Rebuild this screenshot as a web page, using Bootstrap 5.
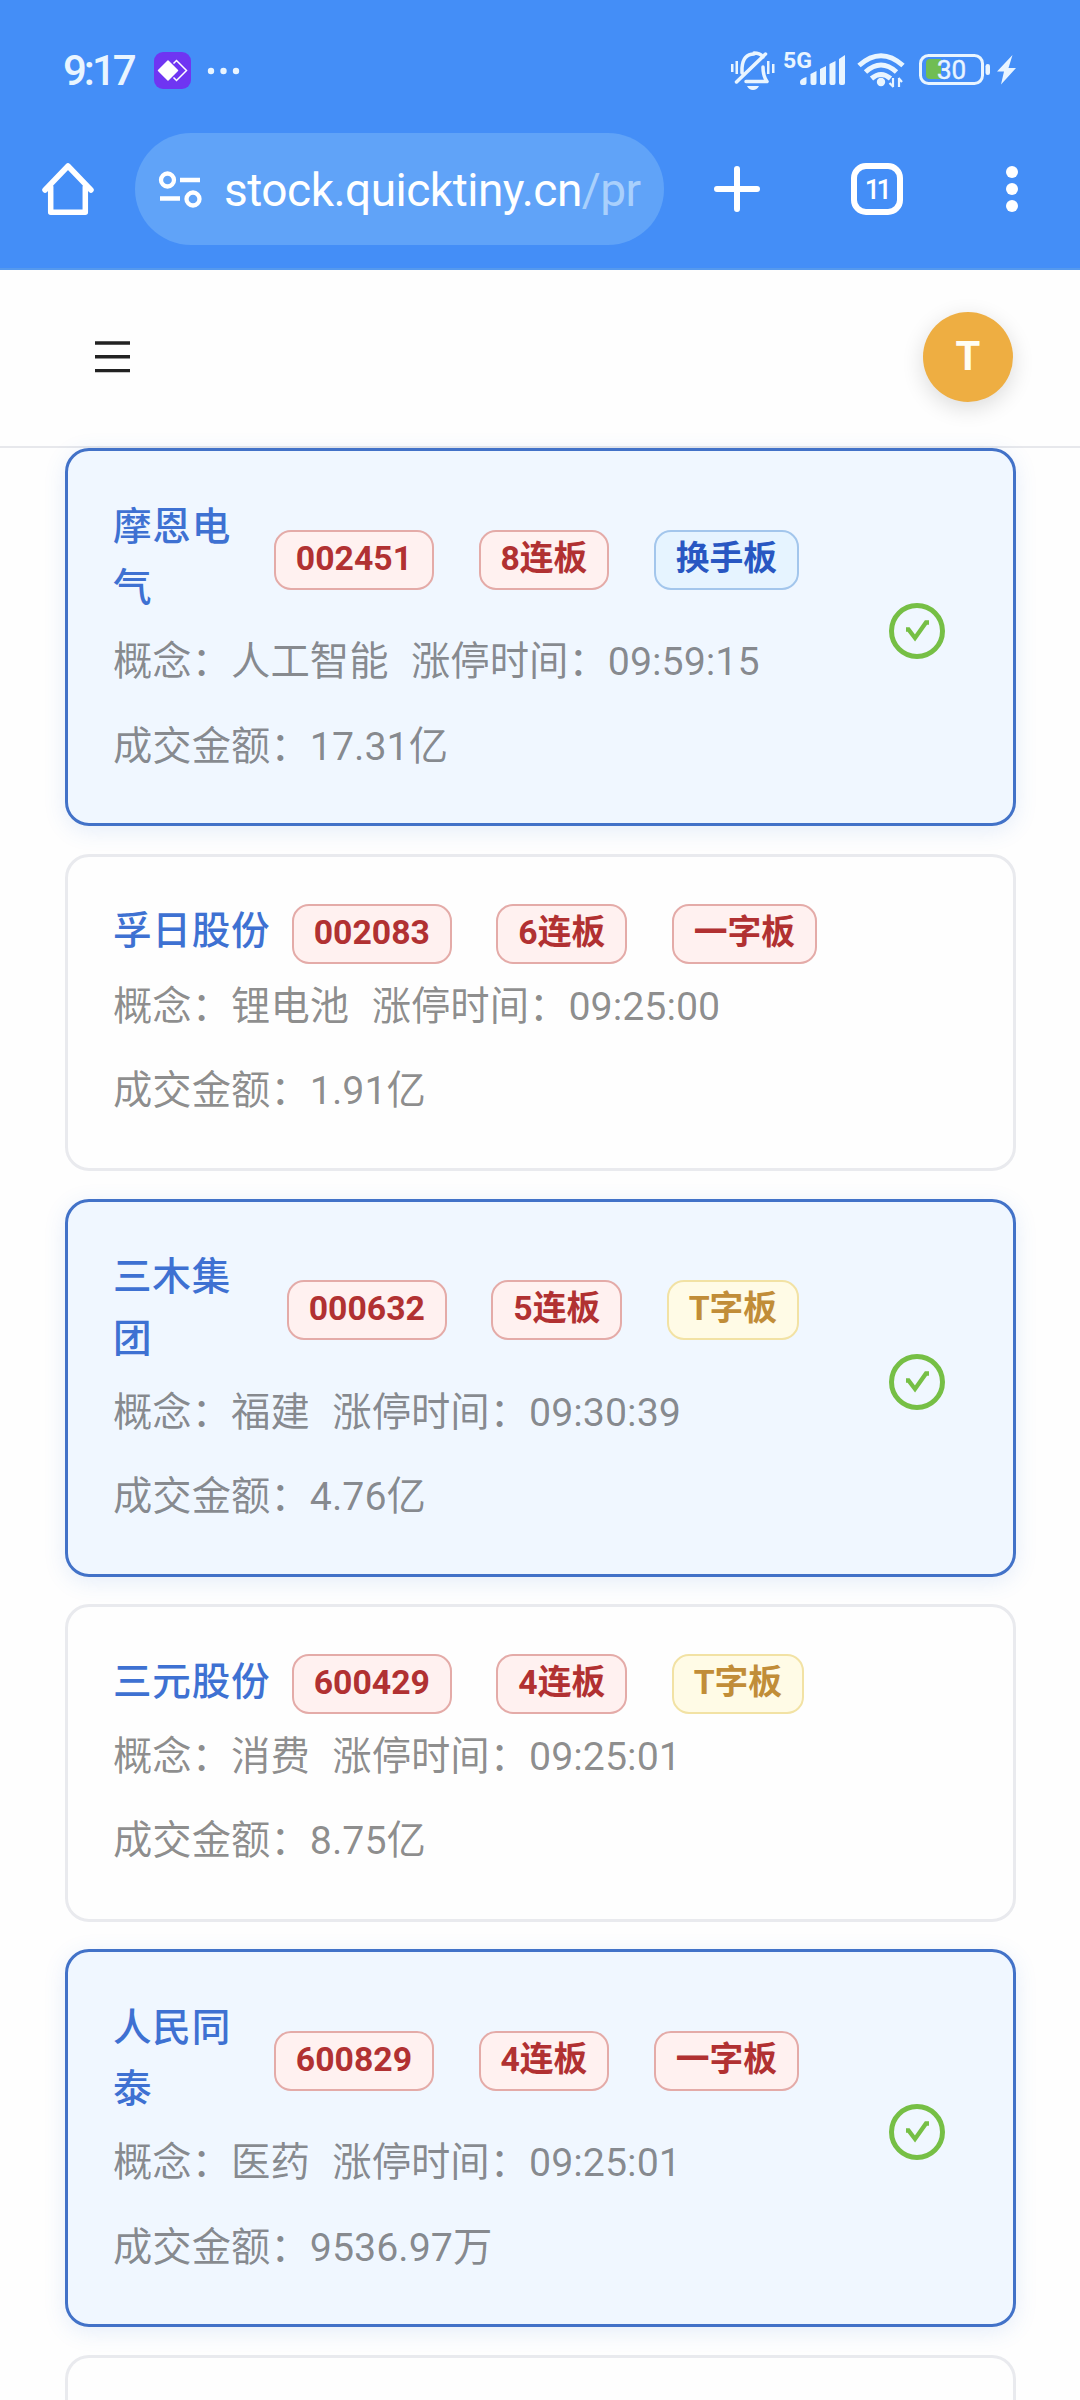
<!DOCTYPE html>
<html lang="zh-CN">
<head>
<meta charset="utf-8">
<meta name="viewport" content="width=device-width, initial-scale=1">
<title>stock.quicktiny.cn</title>
<link rel="stylesheet" href="https://cdn.jsdelivr.net/npm/bootstrap@5.3.0/dist/css/bootstrap.min.css">
<style>
  body { width: 1080px; height: 2400px; overflow: hidden; background: #fefefe; font-family: Roboto, "Noto Sans CJK SC", sans-serif; }
  svg { display: block; flex: none; overflow: visible; }
  .browser-top { height: 270px; background: #448ef7; border-bottom: 2px solid #5599ee; color: #fff; }
  .status-row { height: 133px; padding: 8px 64px 0 63px; color: #e9f5ff; }
  .clock { font-size: 42px; font-weight: 500; line-height: 50px; width: 91px; letter-spacing: -3px; white-space: nowrap; }
  .sys-icons { margin-top: 3px; }
  .tool-row { height: 112px; padding-left: 42px; }
  .url-pill { width: 529px; height: 112px; margin-left: 41px; padding-left: 24px; border-radius: 56px; background: #60a3f8; }
  .url-text { margin-left: 22px; padding-top: 2px; font-size: 46px; white-space: nowrap; letter-spacing: -.5px; }
  .url-text span { color: #a9d0fc; }
  .site-bar { height: 178px; padding: 0 67px 3px 95px; background: #fefefe; border-bottom: 2px solid #e7e8ec; }
  .avatar { width: 90px; height: 90px; background: #eeae42; color: #fffef4; font-size: 40px; font-weight: 700; box-shadow: 0 6px 22px rgba(0,0,0,.14); }
  .stock-list { height: 1952px; padding: 0 64px 0 65px; gap: 27.5px; }
  .stock { height: 317.5px; flex: none; border: 3px solid #e9eaee; border-radius: 24px; padding: 42px 68px 0 45px; background: #fefefe; }
  .stock.picked { height: 378px; padding-top: 44.5px; border-color: #4272c8; background: #f0f7ff; box-shadow: 0 5px 22px rgba(60,120,220,.13); }
  .stock.cut { height: 46px; border-bottom: 0; border-bottom-left-radius: 0; border-bottom-right-radius: 0; }
  .stock-main { width: 686px; }
  .stock.picked .stock-main { flex: none; }
  .stock-name { color: #3e71d2; font-size: 38.6px; letter-spacing: .75px; line-height: 61.875px; font-weight: 500; margin-right: 21.5px; }
  .tags { gap: 44.7px; flex: none; padding-top: 5px; }
  .tag { height: 60px; padding: 0 19.9px; border: 2px solid; border-radius: 17px; font-size: 33.75px; line-height: 53px; font-weight: 700; white-space: nowrap; }
  .tag-red { color: #b13132; background: #fff1f0; border-color: #e4aba8; }
  .tag-blue { color: #2857c2; background: #e6f4ff; border-color: #a3c6ec; }
  .tag-gold { color: #c18d38; background: #fffbe6; border-color: #f2e2a4; }
  .facts { color: rgba(0,0,0,.45); font-size: 39.375px; line-height: 61.875px; gap: 22.5px; white-space: nowrap; margin-top: 12px; }
  .facts + .facts { margin-top: 22.5px; }
  .tick { margin-top: 107.5px; }
</style>
</head>
<body>
<header class="browser-top">
  <div class="status-row d-flex align-items-center">
    <div class="clock">9:17</div>
    <svg width="37" height="37" viewBox="0 0 37 37"><rect width="37" height="37" rx="9" fill="#6f35f2"/><path d="M14 9 23.500 18.500 14 28 4.500 18.500z" fill="#fff" stroke="#fff" stroke-width="1.500" stroke-linejoin="round"/><path d="M19.500 11.500 22.500 8.500 32.500 18.500 22.500 28.500 19.500 25.500" fill="none" stroke="#fff" stroke-width="1.500"/></svg>
    <svg width="32" height="8" viewBox="0 0 32 8" style="margin-left:17px" fill="#e9f5ff"><circle cx="3" cy="4" r="3.200"/><circle cx="15.500" cy="4" r="3.200"/><circle cx="28" cy="4" r="3.200"/></svg>
    <svg class="ms-auto sys-icons" width="286" height="44" viewBox="730 50 286 44" fill="#e9f5ff" stroke="none">
      <g fill="none" stroke="#e9f5ff" stroke-width="3.500" stroke-linecap="round" stroke-linejoin="round"><path d="M742 73V68Q743 54 754 54M754 53Q760 53 763 57M736.500 82 765.500 54M763 67Q763 76 767 81.500H746"/></g>
      <path d="M747 86h12q-2 4-6 4t-6-4z"/>
      <path d="M731 64h2.500v8H731zm4.500-3H738v13h-2.500zM767 61h2.500v13H767zm5 3h2.500v9H772z"/>
      <text x="783" y="67.500" font-family="Roboto" font-size="22" font-weight="700" textLength="29" lengthAdjust="spacingAndGlyphs">5G</text>
      <path d="M800 82q0-3 6.500-5v6q0 2-2 2h-2.500q-2 0-2-3zM810.500 74l6-3v12q0 2-2 2h-2q-2 0-2-2zM820 69l6-3v17q0 2-2 2h-2q-2 0-2-2zM829.500 64l6-3v22q0 2-2 2h-2q-2 0-2-2zM839 59l6-4v28q0 2-2 2h-2q-2 0-2-2z"/>
      <g fill="none" stroke="#e9f5ff" stroke-width="5"><path d="M859 65.500Q881 46 903 65.500M865.500 72Q881 58 896.500 72M871.500 78.500Q881 70.500 890.500 78.500"/></g>
      <circle cx="881" cy="82" r="4.200"/><path d="M893 78v9M893.500 87 889.500 83M899 87v-9M898.500 78 902 82" stroke="#e9f5ff" stroke-width="2.200" fill="none"/>
      <rect x="920.500" y="55.500" width="62" height="28" rx="8" fill="none" stroke="#e9f5ff" stroke-width="3"/>
      <path d="M930 59h11v20h-11q-4 0-4-4V63q0-4 4-4z" fill="#70bd54"/>
      <text x="937" y="79" font-family="Roboto" font-size="26" font-weight="400" textLength="29" stroke="#e9f5ff" stroke-width=".4">30</text>
      <rect x="985.500" y="64" width="4.500" height="11" rx="2.200"/>
      <path d="M1012.500 55 997 71.500h7l-3 13L1016 68h-7.500z"/>
    </svg>
  </div>
  <div class="tool-row d-flex align-items-center">
    <svg width="52" height="52" viewBox="0 0 52 52" fill="none" stroke="#fff" stroke-width="5.500" stroke-linejoin="round" stroke-linecap="round"><path d="M3 27 26 3 49 27M8.700 24v25.300h34.600V24"/></svg>
    <div class="url-pill d-flex align-items-center">
      <svg width="43" height="37" viewBox="0 0 43 37" fill="none" stroke="#fff" stroke-width="4.300"><circle cx="8.500" cy="9" r="6.500"/><path d="M21 9h20M1 27.500h20"/><circle cx="34" cy="28" r="6.500"/></svg>
      <div class="url-text">stock.quicktiny.cn<span>/pr</span></div>
    </div>
    <svg width="46" height="46" viewBox="0 0 46 46" style="margin-left:50px" stroke="#fff" stroke-width="6" stroke-linecap="round"><path d="M23 3v40M3 23h40"/></svg>
    <svg width="52" height="52" viewBox="0 0 52 52" style="margin-left:91px"><rect x="3" y="3" width="46" height="46" rx="12" fill="none" stroke="#fff" stroke-width="6"/><text x="25.500" y="36" text-anchor="middle" fill="#fff" font-family="Roboto" font-weight="500" font-size="27" letter-spacing="-3.500">11</text></svg>
    <svg width="12" height="48" viewBox="0 0 12 48" style="margin-left:103px" fill="#fff"><circle cx="6" cy="7" r="6"/><circle cx="6" cy="24" r="6"/><circle cx="6" cy="41" r="6"/></svg>
  </div>
</header>
<nav class="site-bar d-flex align-items-center justify-content-between">
  <svg width="35" height="32" viewBox="0 0 35 32" stroke="#222" stroke-width="3.400"><path d="M0 2h35M0 15.800h35M0 29.600h35"/></svg>
  <div class="avatar rounded-circle d-flex align-items-center justify-content-center">T</div>
</nav>
<main class="stock-list d-flex flex-column" id="stocks">
  <article class="stock picked d-flex justify-content-between">
    <div class="stock-main">
      <div class="d-flex align-items-center"><div class="stock-name">摩恩电气</div><div class="tags d-flex ms-auto"><span class="tag tag-red">002451</span><span class="tag tag-red">8连板</span><span class="tag tag-blue">换手板</span></div></div>
      <div class="facts d-flex"><span>概念：人工智能</span><span>涨停时间：09:59:15</span></div>
      <div class="facts d-flex"><span>成交金额：17.31亿</span></div>
    </div>
    <svg class="tick" width="56" height="56" viewBox="0 0 56 56" fill="none" stroke="#76bf45"><circle cx="28" cy="28" r="25.500" stroke-width="5"/><path d="M17 26.500h2.500L26 35 37 19.500h3" stroke-width="4.300"/></svg>
  </article>
  <article class="stock">
    <div class="d-flex align-items-center"><div class="stock-name">孚日股份</div><div class="tags d-flex"><span class="tag tag-red">002083</span><span class="tag tag-red">6连板</span><span class="tag tag-red">一字板</span></div></div>
    <div class="facts d-flex"><span>概念：锂电池</span><span>涨停时间：09:25:00</span></div>
    <div class="facts d-flex"><span>成交金额：1.91亿</span></div>
  </article>
  <article class="stock picked d-flex justify-content-between">
    <div class="stock-main">
      <div class="d-flex align-items-center"><div class="stock-name">三木集团</div><div class="tags d-flex ms-auto"><span class="tag tag-red">000632</span><span class="tag tag-red">5连板</span><span class="tag tag-gold">T字板</span></div></div>
      <div class="facts d-flex"><span>概念：福建</span><span>涨停时间：09:30:39</span></div>
      <div class="facts d-flex"><span>成交金额：4.76亿</span></div>
    </div>
    <svg class="tick" width="56" height="56" viewBox="0 0 56 56" fill="none" stroke="#76bf45"><circle cx="28" cy="28" r="25.500" stroke-width="5"/><path d="M17 26.500h2.500L26 35 37 19.500h3" stroke-width="4.300"/></svg>
  </article>
  <article class="stock">
    <div class="d-flex align-items-center"><div class="stock-name">三元股份</div><div class="tags d-flex"><span class="tag tag-red">600429</span><span class="tag tag-red">4连板</span><span class="tag tag-gold">T字板</span></div></div>
    <div class="facts d-flex"><span>概念：消费</span><span>涨停时间：09:25:01</span></div>
    <div class="facts d-flex"><span>成交金额：8.75亿</span></div>
  </article>
  <article class="stock picked d-flex justify-content-between">
    <div class="stock-main">
      <div class="d-flex align-items-center"><div class="stock-name">人民同泰</div><div class="tags d-flex ms-auto"><span class="tag tag-red">600829</span><span class="tag tag-red">4连板</span><span class="tag tag-red">一字板</span></div></div>
      <div class="facts d-flex"><span>概念：医药</span><span>涨停时间：09:25:01</span></div>
      <div class="facts d-flex"><span>成交金额：9536.97万</span></div>
    </div>
    <svg class="tick" width="56" height="56" viewBox="0 0 56 56" fill="none" stroke="#76bf45"><circle cx="28" cy="28" r="25.500" stroke-width="5"/><path d="M17 26.500h2.500L26 35 37 19.500h3" stroke-width="4.300"/></svg>
  </article>
  <article class="stock cut"></article>
</main>
<script src="https://cdn.jsdelivr.net/npm/bootstrap@5.3.0/dist/js/bootstrap.bundle.min.js"></script>
</body>
</html>
